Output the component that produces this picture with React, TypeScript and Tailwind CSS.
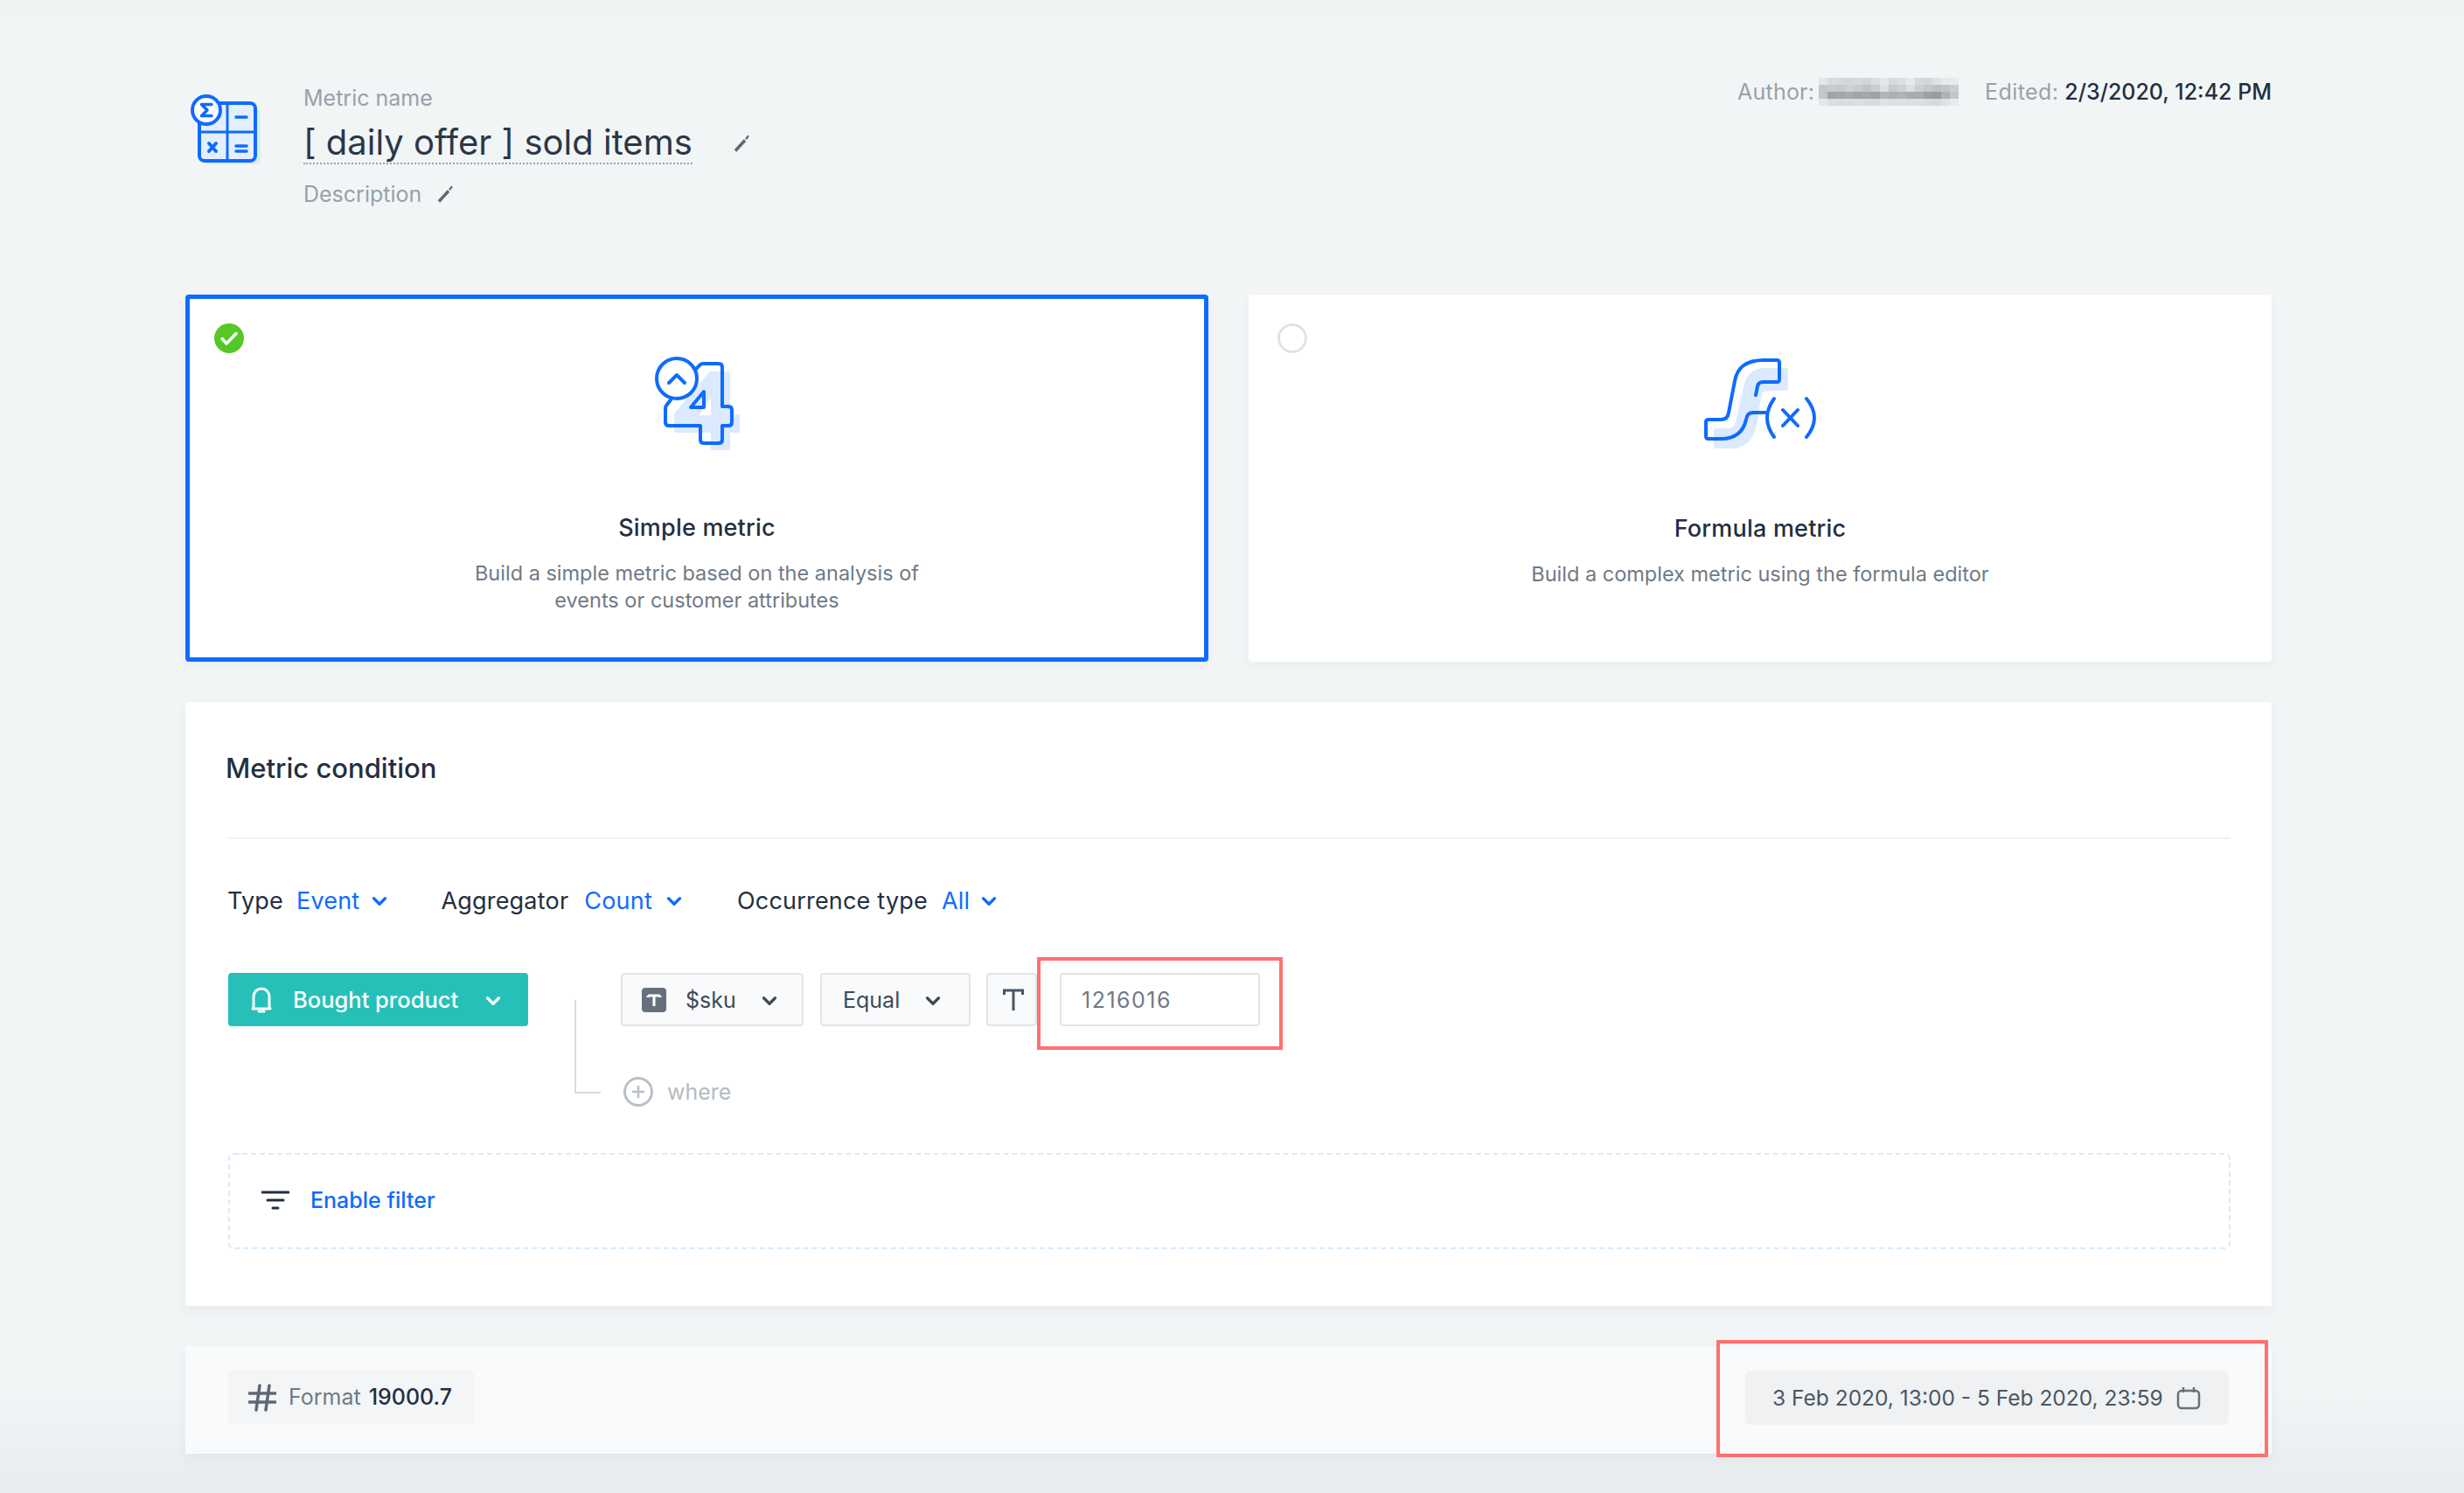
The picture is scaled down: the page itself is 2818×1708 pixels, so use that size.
import { ChevronDown } from 'lucide-react';

const mosaic = [
  ['#e4e7e9', '#d9dcdf', '#d5d9dc', '#d2d6d9', '#d7dadd', '#d2d6d9', '#dcdfe1', '#e5e8ea', '#d7dbde', '#dde0e2', '#e6e9eb', '#d5d9dc', '#d2d6d9', '#dfe2e4', '#e6e8ea', '#e8eaec'],
  ['#c4c8cc', '#c8ccd0', '#c4c9cd', '#cdd1d4', '#c8ccd0', '#bfc4c9', '#c9cdd1', '#dde0e2', '#c6cbcf', '#cdd1d4', '#dcdfe1', '#ccd0d3', '#c4c8cc', '#bcc1c6', '#c2c6ca', '#cbcfd2'],
  ['#c2c6ca', '#9ea4aa', '#a1a7ad', '#a5abb0', '#9ea4aa', '#a1a7ad', '#9ba1a7', '#b1b6bb', '#aab0b5', '#adb3b6', '#a6acb1', '#a6acb1', '#9aa0a6', '#969ca3', '#adb2b7', '#c2c6ca'],
  ['#e4e7e9', '#dcdfe1', '#d9dcdf', '#dadde0', '#dcdfe1', '#d9dcdf', '#d7dadd', '#dfe2e4', '#dcdfe1', '#dde0e2', '#dcdfe1', '#dde0e2', '#d9dcdf', '#d7dadd', '#dfe2e4', '#e8eaec'],
];

function MetricsIcon() {
  return (
    <svg width="80" height="80" viewBox="0 0 80 80" fill="none">
      <rect x="16" y="16" width="64" height="64" rx="6" fill="#dbeafe" />
      <rect x="10" y="10" width="64" height="66" rx="6" fill="#e4effd" stroke="#0f6bff" strokeWidth="4" />
      <path d="M42 10v66M10 43h64" stroke="#0f6bff" strokeWidth="3" />
      <circle cx="18" cy="18" r="16" fill="#fff" stroke="#0f6bff" strokeWidth="4" />
      <path d="M24 11.5H12.5L19 18l-6.5 6.5H24" stroke="#0f6bff" strokeWidth="3.5" strokeLinejoin="round" strokeLinecap="round" />
      <path d="M52 26h12M52 59h12M52 65h12" stroke="#0f6bff" strokeWidth="3.5" strokeLinecap="round" />
      <path d="M21 56l8 9M29 56l-8 9" stroke="#0f6bff" strokeWidth="4" strokeLinecap="round" />
    </svg>
  );
}

function SimpleIcon() {
  return (
    <svg width="97" height="107" viewBox="0 0 97 107" fill="none">
      <path fillRule="evenodd" d="M63 17H84q2 0 2 2V66H95q2 0 2 2V85q0 2-2 2H86V105q0 2-2 2H66q-2 0-2-2V87H24q-2 0-2-2V65ZM64 47V67H50Z" fill="#dbeafe" />
      <path d="M44 17l8-8q1-1 3-1H73q4 0 4 4V57H84q4 0 4 4V75q0 4-4 4H77V95q0 4-4 4H56q-4 0-4-4V79H16q-4 0-4-4V59q0-2 1-3l6-8" stroke="#0f6bff" strokeWidth="4" strokeLinejoin="round" />
      <path d="M56 40V58H41Z" stroke="#0f6bff" strokeWidth="4" strokeLinejoin="round" />
      <circle cx="25" cy="25" r="23" fill="#fff" stroke="#0f6bff" strokeWidth="4" />
      <path d="M16 30l9-9 9 9" stroke="#0f6bff" strokeWidth="4" strokeLinecap="round" strokeLinejoin="round" />
    </svg>
  );
}

function FormulaIcon() {
  return (
    <svg width="130" height="104" viewBox="0 0 130 104" fill="none">
      <path d="M70 11H95q2 0 2 3V34q0 3-3 3H73q-6 0-7 7l-4 27q-5 32-30 32H14q-2 0-2-2V82q0-2 2-2H29q6 0 8-8l9-39Q50 11 70 11Z" fill="#dbeafe" />
      <path d="M69 2H84q3 0 3 3V24q0 3-3 3H68q-5 0-6 5l-2 10" stroke="#0f6bff" strokeWidth="4" strokeLinecap="round" />
      <path d="M69 2Q40 2 36 26L29 62q-1 8-9 8H6q-3 0-3 3V89q0 3 3 3H20q24 0 29-22 1-8 8-8H71" stroke="#0f6bff" strokeWidth="4" strokeLinecap="round" />
      <path d="M81 46q-8 11-8 22t8 22M118 46q9 11 9 22t-9 22M91 59l17 18M108 59L91 77" stroke="#0f6bff" strokeWidth="4" strokeLinecap="round" />
    </svg>
  );
}

function EditPencil({ className }: { className: string }) {
  return (
    <svg className={className} width="18" height="20" viewBox="0 0 18 20" fill="none">
      <path d="M2 18.5L13 6.5" stroke="#5d6875" strokeWidth="3.5" />
      <path d="M14.5 4.5L16.5 2" stroke="#5d6875" strokeWidth="2.2" strokeLinecap="round" />
    </svg>
  );
}

export default function App() {
  return (
    <div className="relative h-[1708px] overflow-hidden bg-[linear-gradient(to_bottom,#f0f3f4_0%,#f2f5f6_2%,#f2f5f6_93%,#e9ecee_100%)] pl-[212px] pr-[220px] font-['Inter',sans-serif] text-[#232f3f]">
      {/* Header */}
      <header className="flex h-[337px] items-start">
        <div className="ml-[6px] mt-[108px]">
          <MetricsIcon />
        </div>
        <div className="ml-[49px] mt-[96px]">
          <p className="text-[25px] leading-[32px] text-[#98a1ab]">Metric name</p>
          <div className="mt-[12px] flex items-center">
            <h1 className="border-b-2 border-dotted border-[#9aa2ab] text-[40px] leading-[46px] text-[#2b3747]">[ daily offer ] sold items</h1>
            <EditPencil className="ml-[47px]" />
          </div>
          <div className="mt-[18px] flex items-center">
            <span className="text-[25px] leading-[32px] text-[#98a1ab]">Description</span>
            <EditPencil className="ml-[18px]" />
          </div>
        </div>
        <div className="ml-auto mt-[88px] flex items-center text-[25px] leading-[34px] text-[#98a1ab]">
          <span className="tracking-[0.2px]">Author:</span>
          <div className="ml-[5px] flex flex-col">
            {mosaic.map((row, i) => (
              <div key={i} className="flex h-[8px]">
                {row.map((color, j) => (
                  <div key={j} className="h-full w-[10px]" style={{ backgroundColor: color }} />
                ))}
              </div>
            ))}
          </div>
          <span className="ml-[30px] tracking-[0.4px]">Edited:</span>
          <span className="ml-[7px] font-medium text-[#232f3f]">2/3/2020, 12:42 PM</span>
        </div>
      </header>

      {/* Metric type cards */}
      <section className="flex gap-[46px]">
        <div className="relative flex h-[420px] w-[1170px] flex-col items-center rounded-[4px] border-[5px] border-[#0f6bff] bg-white shadow-[0_4px_12px_rgba(30,50,70,0.04)]">
          <div className="absolute left-[28px] top-[28px] flex h-[34px] w-[34px] items-center justify-center rounded-full bg-[#56c826]">
            <svg width="24" height="24" viewBox="0 0 24 24" fill="none">
              <path d="M4 12.5l5 5.5L20 6.5" stroke="#fff" strokeWidth="3.5" strokeLinecap="round" strokeLinejoin="round" />
            </svg>
          </div>
          <div className="mt-[66px]">
            <SimpleIcon />
          </div>
          <h2 className="mt-[72px] text-[27px] font-medium leading-[34px] tracking-[0.2px]">Simple metric</h2>
          <p className="mt-[19px] w-[540px] text-center text-[23.5px] leading-[31px] text-[#6f7a87]">
            Build a simple metric based on the analysis of events or customer attributes
          </p>
        </div>
        <div className="relative flex h-[420px] w-[1170px] flex-col items-center rounded-[4px] bg-white shadow-[0_4px_12px_rgba(30,50,70,0.04)]">
          <div className="absolute left-[33px] top-[33px] h-[34px] w-[34px] rounded-full border-[3px] border-[#dfe3e6]" />
          <div className="mt-[73px]">
            <FormulaIcon />
          </div>
          <h2 className="mt-[74px] text-[27px] font-medium leading-[34px] tracking-[0.2px]">Formula metric</h2>
          <p className="mt-[19px] text-center text-[23.5px] leading-[31px] text-[#6f7a87]">Build a complex metric using the formula editor</p>
        </div>
      </section>

      {/* Metric condition */}
      <section className="mt-[46px] h-[691px] rounded-t-[4px] bg-white px-[48px] shadow-[0_6px_14px_rgba(30,50,70,0.05)]">
        <div className="border-b-2 border-[#eef0f2] pb-[59px] pt-[56px]">
          <h2 className="-ml-[2px] text-[31px] font-medium leading-[40px]">Metric condition</h2>
        </div>
        <div className="mt-[53px] flex h-[36px] items-center text-[27px] leading-[36px] tracking-[0.2px]">
          <span>Type</span>
          <span className="ml-[15px] text-[#0f6bff]">Event</span>
          <ChevronDown className="ml-[10px] h-[26px] w-[26px] text-[#0f6bff]" strokeWidth={3} />
          <span className="ml-[57px]">Aggregator</span>
          <span className="ml-[18px] text-[#0f6bff]">Count</span>
          <ChevronDown className="ml-[12px] h-[26px] w-[26px] text-[#0f6bff]" strokeWidth={3} />
          <span className="ml-[59px]">Occurrence type</span>
          <span className="ml-[16px] text-[#0f6bff]">All</span>
          <ChevronDown className="ml-[9px] h-[26px] w-[26px] text-[#0f6bff]" strokeWidth={3} />
        </div>

        <div className="ml-[1px] mt-[64px] flex items-start">
          <button className="flex h-[61px] w-[343px] items-center rounded-[4px] bg-[#26c0b8] pl-[26px] text-[25.5px] font-medium text-white">
            <svg width="24" height="30" viewBox="0 0 24 30" fill="none">
              <path d="M3 23V11a9 9 0 0118 0v12l1 2H2Z" stroke="#fff" strokeWidth="3" strokeLinejoin="round" />
              <path d="M9 28h6" stroke="#fff" strokeWidth="3" strokeLinecap="round" />
            </svg>
            <span className="ml-[24px] mt-[2px]">Bought product</span>
            <ChevronDown className="ml-[27px] mt-[2px] h-[26px] w-[26px]" strokeWidth={3} />
          </button>
          <div className="ml-[53px] mt-[31px] h-[107px] w-[30px] border-b-2 border-l-2 border-[#d8dcdf]" />
          <div className="ml-[23px]">
            <div className="flex items-center">
              <div className="flex h-[61px] w-[209px] items-center rounded-[4px] border-2 border-[#e1e5e8] bg-[#f9fafc] pl-[22px] text-[25px] text-[#3e4a59]">
                <span className="flex h-[28px] w-[28px] items-center justify-center rounded-[4px] bg-[#66717d]">
                  <svg width="18" height="18" viewBox="0 0 18 18" fill="none">
                    <path d="M2 4h14M9 4v12M2 4v2M16 4v2" stroke="#fff" strokeWidth="3" />
                  </svg>
                </span>
                <span className="ml-[22px] mt-[2px]">$sku</span>
                <ChevronDown className="ml-[25px] mt-[2px] h-[26px] w-[26px] text-[#3e4a59]" strokeWidth={3} />
              </div>
              <div className="ml-[19px] flex h-[61px] w-[172px] items-center rounded-[4px] border-2 border-[#e1e5e8] bg-[#f9fafc] pl-[24px] text-[25px] text-[#3e4a59]">
                <span className="mt-[2px]">Equal</span>
                <ChevronDown className="ml-[25px] mt-[2px] h-[26px] w-[26px]" strokeWidth={3} />
              </div>
              <div className="ml-[18px] flex h-[61px] w-[58px] items-center rounded-[4px] border-2 border-[#e1e5e8] bg-[#f9fafc] pl-[17px]">
                <svg width="24" height="26" viewBox="0 0 24 26" fill="none">
                  <path d="M1.5 7V2h21v5M12 2v23" stroke="#4a5665" strokeWidth="3" />
                </svg>
              </div>
              <div className="relative ml-[26px] flex h-[61px] w-[229px] items-center rounded-[4px] border-2 border-[#e1e5e8] bg-white pl-[23px] text-[25px] tracking-[1.5px] text-[#6f7a87]">
                <span className="mt-[2px]">1216016</span>
                <div className="absolute -bottom-[29px] -left-[28px] -right-[28px] -top-[20px] border-[4px] border-[#ff7070]" />
              </div>
            </div>
            <div className="ml-[3px] mt-[58px] flex items-center">
              <span className="flex h-[34px] w-[34px] items-center justify-center rounded-full border-[3px] border-[#b9c0c6]">
                <svg width="18" height="18" viewBox="0 0 18 18" fill="none">
                  <path d="M9 2v14M2 9h14" stroke="#b9c0c6" strokeWidth="2.5" />
                </svg>
              </span>
              <span className="ml-[16px] text-[25px] leading-[34px] text-[#b4bbc2]">where</span>
            </div>
          </div>
        </div>

        <div className="ml-[1px] mr-[-1px] mt-[53px] flex h-[110px] items-center rounded-[6px] border-2 border-dashed border-[#d8eafc] pl-[36px]">
          <svg width="32" height="24" viewBox="0 0 32 24" fill="none">
            <path d="M1 2h30M7 11h18M13 20h6" stroke="#232f3f" strokeWidth="3" strokeLinecap="round" />
          </svg>
          <span className="ml-[24px] text-[25px] font-medium text-[#0f6bff]">Enable filter</span>
        </div>
      </section>

      {/* Footer */}
      <section className="mt-[46px] flex h-[123px] items-center justify-between bg-[#f9fafc] pb-[5px] pl-[49px] pr-[49px] shadow-[0_6px_14px_rgba(30,50,70,0.05)]">
        <div className="flex h-[62px] w-[282px] items-center rounded-[6px] bg-[#f3f5f6] pl-[23px] text-[25px]">
          <svg width="32" height="32" viewBox="0 0 32 32" fill="none">
            <path d="M1 11h30M1 21h30M13 2L9 30M24 2l-4 28" stroke="#5d6875" strokeWidth="3.5" strokeLinecap="round" />
          </svg>
          <span className="ml-[14px] text-[#6f7a87]">Format</span>
          <span className="ml-[9px] font-medium text-[#232f3f]">19000.7</span>
        </div>
        <div className="relative flex h-[62px] w-[553px] items-center rounded-[6px] bg-[#f0f1f3] pl-[31px] text-[24.5px] text-[#4a5665]">
          <span>3 Feb 2020, 13:00 - 5 Feb 2020, 23:59</span>
          <svg className="ml-[15px]" width="28" height="27" viewBox="0 0 28 27" fill="none">
            <rect x="2" y="5" width="24" height="20" rx="4" stroke="#66717d" strokeWidth="2.5" />
            <path d="M8 1v6M20 1v6" stroke="#66717d" strokeWidth="2.5" />
          </svg>
          <div className="absolute -bottom-[37px] -left-[33px] -right-[45px] -top-[35px] border-[4px] border-[#ff7070]" />
        </div>
      </section>
    </div>
  );
}
